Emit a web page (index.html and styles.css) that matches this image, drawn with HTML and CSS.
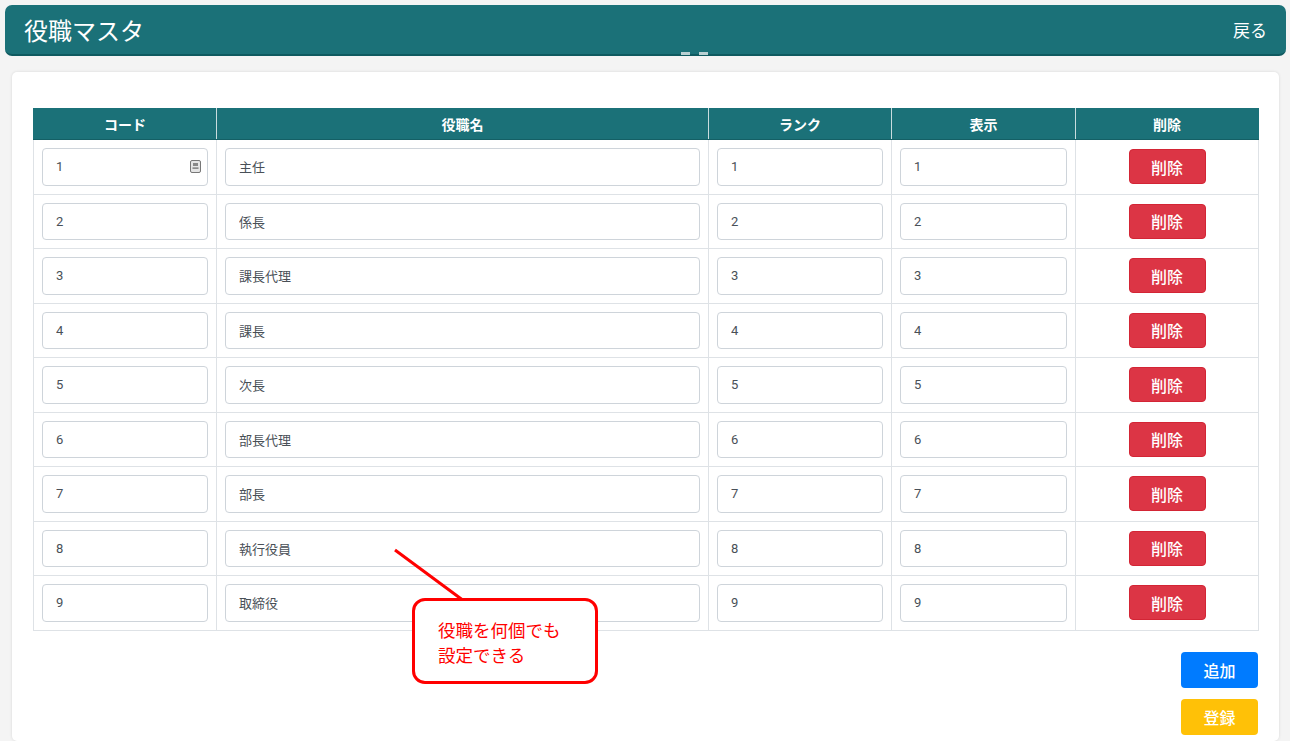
FILE: index.html
```html
<!DOCTYPE html>
<html lang="ja">

<head>
  <meta charset="UTF-8">
  <meta name="viewport" content="width=device-width, initial-scale=1.0">
  <title>役職マスタ</title>

  <link rel="stylesheet" href="styles.css">
</head>

<body>
  <header class="page-header">
    <h1 class="page-title">役職マスタ</h1>
    <a class="back-link" href="#">戻る</a>
    <div class="grip"><span></span><span></span></div>
  </header>

  <main class="card">
    <table class="master-table">
      <colgroup>
        <col class="col-code">
        <col class="col-name">
        <col class="col-rank">
        <col class="col-disp">
        <col class="col-del">
      </colgroup>
      <thead>
        <tr>
          <th>コード</th>
          <th>役職名</th>
          <th>ランク</th>
          <th>表示</th>
          <th>削除</th>
        </tr>
      </thead>
      <tbody>
        <tr>
          <td>
            <div class="input-wrap">
              <input class="form-input" type="text" value="1">
              <svg class="spin" width="11" height="13" viewBox="0 0 11 13">
                <rect x="0.5" y="0.5" width="10" height="12" rx="1.5" fill="#e4e4e4" stroke="#777"/>
                <rect x="3" y="3" width="5" height="3" fill="#888"/>
                <rect x="2.5" y="7.5" width="6" height="1.2" fill="#666"/>
              </svg>
            </div>
          </td>
          <td><input class="form-input" type="text" value="主任"></td>
          <td><input class="form-input" type="text" value="1"></td>
          <td><input class="form-input" type="text" value="1"></td>
          <td class="del-cell"><button class="btn btn-danger">削除</button></td>
        </tr>
        <tr>
          <td><input class="form-input" type="text" value="2"></td>
          <td><input class="form-input" type="text" value="係長"></td>
          <td><input class="form-input" type="text" value="2"></td>
          <td><input class="form-input" type="text" value="2"></td>
          <td class="del-cell"><button class="btn btn-danger">削除</button></td>
        </tr>
        <tr>
          <td><input class="form-input" type="text" value="3"></td>
          <td><input class="form-input" type="text" value="課長代理"></td>
          <td><input class="form-input" type="text" value="3"></td>
          <td><input class="form-input" type="text" value="3"></td>
          <td class="del-cell"><button class="btn btn-danger">削除</button></td>
        </tr>
        <tr>
          <td><input class="form-input" type="text" value="4"></td>
          <td><input class="form-input" type="text" value="課長"></td>
          <td><input class="form-input" type="text" value="4"></td>
          <td><input class="form-input" type="text" value="4"></td>
          <td class="del-cell"><button class="btn btn-danger">削除</button></td>
        </tr>
        <tr>
          <td><input class="form-input" type="text" value="5"></td>
          <td><input class="form-input" type="text" value="次長"></td>
          <td><input class="form-input" type="text" value="5"></td>
          <td><input class="form-input" type="text" value="5"></td>
          <td class="del-cell"><button class="btn btn-danger">削除</button></td>
        </tr>
        <tr>
          <td><input class="form-input" type="text" value="6"></td>
          <td><input class="form-input" type="text" value="部長代理"></td>
          <td><input class="form-input" type="text" value="6"></td>
          <td><input class="form-input" type="text" value="6"></td>
          <td class="del-cell"><button class="btn btn-danger">削除</button></td>
        </tr>
        <tr>
          <td><input class="form-input" type="text" value="7"></td>
          <td><input class="form-input" type="text" value="部長"></td>
          <td><input class="form-input" type="text" value="7"></td>
          <td><input class="form-input" type="text" value="7"></td>
          <td class="del-cell"><button class="btn btn-danger">削除</button></td>
        </tr>
        <tr>
          <td><input class="form-input" type="text" value="8"></td>
          <td><input class="form-input" type="text" value="執行役員"></td>
          <td><input class="form-input" type="text" value="8"></td>
          <td><input class="form-input" type="text" value="8"></td>
          <td class="del-cell"><button class="btn btn-danger">削除</button></td>
        </tr>
        <tr>
          <td><input class="form-input" type="text" value="9"></td>
          <td><input class="form-input" type="text" value="取締役"></td>
          <td><input class="form-input" type="text" value="9"></td>
          <td><input class="form-input" type="text" value="9"></td>
          <td class="del-cell"><button class="btn btn-danger">削除</button></td>
        </tr>
      </tbody>
    </table>

    <div class="actions">
      <button class="btn btn-primary">追加</button>
      <button class="btn btn-warning">登録</button>
    </div>

    <!-- 注釈 (吹き出し) -->
    <svg class="callout-line" width="80" height="60" viewBox="0 0 80 60">
      <line x1="3" y1="3" x2="72" y2="54" stroke="#f00" stroke-width="3"/>
    </svg>
    <div class="callout">役職を何個でも<br>設定できる</div>
  </main>
</body>

</html>
```

FILE: styles.css
```css
html {
  font-size: 16px;
}

body {
  margin: 0;
  padding: 5px 4px 0 5px;
  background-color: #f4f4f4;
  font-family: Roboto, "Noto Sans CJK JP", sans-serif;
  color: #212529;
}

.page-header {
  position: relative;
  display: flex;
  align-items: center;
  justify-content: space-between;
  height: 49px;
  padding: 0 19px;
  background-color: #1b7178;
  border-bottom: 2px solid #0f5a60;
  border-radius: 7px;
}

.page-title {
  margin: 0;
  font-size: 24px;
  font-weight: normal;
  color: #fff;
}

.back-link {
  font-size: 17px;
  color: #fff;
  text-decoration: none;
}

/* 下中央の小さなつまみ */
.grip {
  position: absolute;
  left: 676px;
  bottom: -1px;
  display: flex;
  gap: 9px;
}

.grip span {
  display: block;
  width: 9px;
  height: 3px;
  background-color: #b9d0d2;
}

.card {
  position: relative;
  margin: 16px 7px 0 7px;
  padding: 36px 21px 6px 21px;
  background-color: #fff;
  border-radius: 5px;
  box-shadow: 0 0 3px rgba(0, 0, 0, 0.12);
}

.master-table {
  width: 100%;
  border-collapse: collapse;
  table-layout: fixed;
}

.col-code { width: 183px; }
.col-name { width: 492px; }
.col-rank { width: 183px; }
.col-disp { width: 184px; }
.col-del  { width: 183px; }

.master-table th {
  height: 30px;
  padding: 0;
  background-color: #1b7178;
  color: #fff;
  font-size: 14px;
  font-weight: bold;
  border: 1px solid #c9dcde;
  border-top-color: #1b7178;
  border-bottom-color: #145f65;
}

.master-table th:first-child {
  border-left-color: #1b7178;
}

.master-table th:last-child {
  border-right-color: #1b7178;
}

.master-table td {
  padding: 8px;
  border: 1px solid #dee2e6;
}

.input-wrap {
  position: relative;
}

.form-input {
  display: block;
  box-sizing: border-box;
  width: 100%;
  height: 37.5px;
  padding: 0 13px;
  border: 1px solid #ced4da;
  border-radius: 4px;
  font-family: Roboto, "Noto Sans CJK JP", sans-serif;
  font-size: 13px;
  color: #495057;
  background-color: #fff;
}

.spin {
  position: absolute;
  right: 7px;
  top: 12px;
}

.del-cell {
  text-align: center;
}

.btn {
  box-sizing: border-box;
  width: 77px;
  height: 35px;
  padding: 0;
  border: 1px solid transparent;
  border-radius: 4px;
  font-family: "Noto Sans CJK JP", sans-serif;
  font-size: 16px;
  font-weight: 500;
  color: #fff;
  cursor: pointer;
}

.btn-danger {
  display: inline-block;
  vertical-align: top;
  background-color: #dc3545;
  border-color: #d32535;
}

.btn-primary {
  height: 36px;
  background-color: #007bff;
}

.btn-warning {
  height: 36px;
  background-color: #ffc107;
}

.actions {
  display: flex;
  flex-direction: column;
  align-items: flex-end;
  gap: 11px;
  margin-top: 21px;
}

.callout-line {
  position: absolute;
  left: 380px;
  top: 475px;
}

.callout {
  position: absolute;
  left: 400px;
  top: 526px;
  box-sizing: border-box;
  width: 186px;
  height: 86px;
  padding: 16px 0 0 23px;
  border: 3px solid #f00;
  border-radius: 13px;
  background-color: #fff;
  color: #f00;
  font-family: "Noto Sans CJK JP", sans-serif;
  font-size: 17.5px;
  line-height: 25px;
}
```
